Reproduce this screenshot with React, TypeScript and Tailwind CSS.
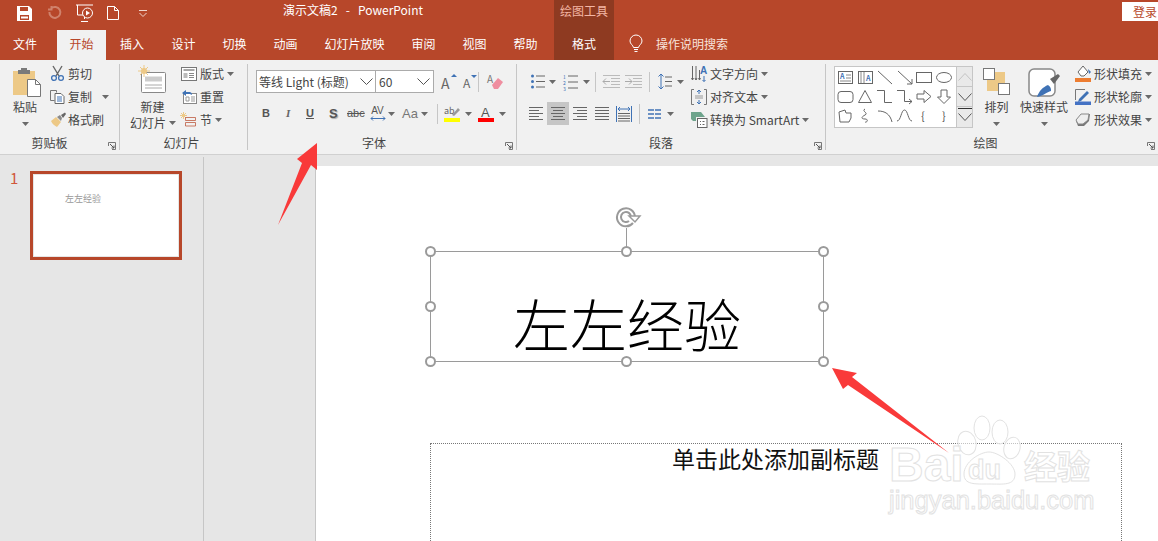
import React from 'react';

const Caret = ({ className = '' }: { className?: string }) => (
  <svg width="7" height="4" viewBox="0 0 7 4" className={`shrink-0 ${className}`}>
    <path d="M0 0h7L3.5 4z" fill="#6a6a6a" />
  </svg>
);

const Ico = ({ w = 16, h = 16, children, className = '' }: { w?: number; h?: number; children: React.ReactNode; className?: string }) => (
  <svg width={w} height={h} viewBox={`0 0 ${w} ${h}`} fill="none" className={`shrink-0 overflow-visible ${className}`}>
    {children}
  </svg>
);

const Launcher = () => (
  <svg width="8" height="8" viewBox="0 0 8 8" fill="none" className="absolute right-[3px] bottom-[4px]">
    <path d="M.5 4V.5H7.5V7.5H4" stroke="#777" />
    <path d="M2 2l4 4M6 3.500V6H3.500" stroke="#555" />
  </svg>
);

const Group = ({ width, label, labelClass = '', launcher = true, children }: { width: string; label: string; labelClass?: string; launcher?: boolean; children: React.ReactNode }) => (
  <div className={`relative flex flex-col h-full shrink-0 ${width}`}>
    <div className="h-[75px] flex">{children}</div>
    <div className={`text-center text-[12px] leading-[16px] text-[#444] ${labelClass}`}>{label}</div>
    {launcher && <Launcher />}
  </div>
);

const Sep = () => <div className="w-px my-[4px] h-[86px] bg-[#c6c6c6] shrink-0" />;
const VSep = () => <div className="w-px h-[20px] bg-[#c6c6c6] shrink-0" />;

const Row = ({ children, className = '' }: { children: React.ReactNode; className?: string }) => (
  <div className={`h-[23px] flex items-center text-[12px] text-[#444] whitespace-nowrap ${className}`}>{children}</div>
);

const tabs = [
  { label: '文件', cls: 'w-[50px] mr-[7px]' },
  { label: '开始', cls: 'w-[49px] bg-[#f1f1f1] text-[#b7472a]' },
  { label: '插入', cls: 'w-[52px]' },
  { label: '设计', cls: 'w-[51px]' },
  { label: '切换', cls: 'w-[51px]' },
  { label: '动画', cls: 'w-[51px]' },
  { label: '幻灯片放映', cls: 'w-[87px]' },
  { label: '审阅', cls: 'w-[51px]' },
  { label: '视图', cls: 'w-[51px]' },
  { label: '帮助', cls: 'w-[51px] mr-[3px]' },
  { label: '格式', cls: 'w-[60px] bg-[#8e3a21]' },
];

const TitleBar = () => (
  <div className="h-[30px] bg-[#b7472a] flex items-start text-white shrink-0">
    <div className="flex items-center h-[26px] pl-[17px] w-[283px]">
      <Ico w={15} h={15}>
        <path d="M0 0h12l3 3v12H0z" fill="#fff" />
        <path d="M3 1h8v4H3zM3 9h9v5H3z" fill="#b7472a" />
        <path d="M4 10.500h7v2H4z" fill="#fff" />
      </Ico>
      <Ico w={14} h={14} className="ml-[15px]">
        <path d="M4 2.500a5.500 5.500 0 1 1-1.600 3.500M4.500 0v3.500H1" stroke="#d0826c" strokeWidth="2" />
      </Ico>
      <Ico w={17} h={18} className="ml-[15px]">
        <path d="M0 1h17M1.500 1v10h7M8.500 11v4M5 17.500h7" stroke="#fff" />
        <circle cx="11.500" cy="9" r="5" fill="#b7472a" stroke="#fff" />
        <path d="M10 6.500l4 2.500-4 2.500z" fill="#fff" />
      </Ico>
      <Ico w={12} h={14} className="ml-[14px]">
        <path d="M.5.500h7l4 4v9H.5zM7.500.500v4h4" stroke="#fff" />
      </Ico>
      <Ico w={8} h={7} className="ml-[20px]">
        <path d="M0 .500h8M.5 3l3.500 3.500L7.500 3" stroke="#f0d5cc" />
      </Ico>
    </div>
    <div className="w-[271px] h-[20px] flex items-center text-[12px] whitespace-pre">演示文稿2   -   PowerPoint</div>
    <div className="w-[60px] h-[30px] bg-[#8e3a21] text-[#f3b6a4] text-[12px] pt-[2px] text-center leading-[17px]">绘图工具</div>
    <div className="flex-1" />
    <div className="w-[36px] h-[19px] mt-[2px] bg-white text-[#b7472a] text-[12px] flex items-center justify-end pr-[1px]">登录</div>
  </div>
);

const TabBar = () => (
  <div className="h-[30px] bg-[#b7472a] flex text-white text-[12px] shrink-0">
    {tabs.map((t) => (
      <div key={t.label} className={`h-full flex items-center justify-center pb-[2px] ${t.cls}`}>{t.label}</div>
    ))}
    <div className="flex items-center ml-[15px] text-[#f7e3dc] pb-[2px]">
      <Ico w={14} h={18}>
        <path d="M4.500 12.500C4 10 1 9 1 6a6 6 0 0 1 12 0c0 3-3 4-3.500 6.500z" stroke="#fff" />
        <path d="M5 14.500h4M5.500 16.500h3" stroke="#fff" />
      </Ico>
      <span className="ml-[13px]">操作说明搜索</span>
    </div>
  </div>
);

const Clipboard = () => (
  <Group width="w-[119px]" label="剪贴板" labelClass="pr-[20px]">
    <div className="w-[50px] flex flex-col items-center pt-[8px]">
      <Ico w={28} h={29} className="ml-[4px]">
        <path d="M0 3h22v24H0z" fill="#edc987" />
        <path d="M5 2h12v4H5zM8 0h6v3H8z" fill="#7a7a7a" />
        <path d="M14.500 11.500h8l5 5v12h-13z" fill="#fff" stroke="#777" />
        <path d="M22.500 11.500v5h5" stroke="#777" />
      </Ico>
      <div className="text-[12px] text-[#444] leading-[16px] mt-[2px] whitespace-nowrap">粘贴</div>
      <Caret className="mt-[7px]" />
    </div>
    <div className="pt-[2px]">
      <Row>
        <Ico w={15} h={15}>
          <path d="M3 0l6 10M12 0L6 10" stroke="#666" strokeWidth="1.400" />
          <circle cx="4" cy="12" r="2.400" stroke="#3f72b5" strokeWidth="1.300" />
          <circle cx="11" cy="12" r="2.400" stroke="#3f72b5" strokeWidth="1.300" />
        </Ico>
        <span className="ml-[3px]">剪切</span>
      </Row>
      <Row>
        <Ico w={15} h={14}>
          <path d="M.5.500h6v2M.5.500v10h4" stroke="#777" />
          <path d="M5 3.500h6l3 3v7H5z" fill="#fff" stroke="#666" />
          <path d="M7 7h5M7 9h5M7 11h5" stroke="#3f72b5" />
        </Ico>
        <span className="ml-[3px]">复制</span>
        <Caret className="ml-[10px]" />
      </Row>
      <Row>
        <Ico w={16} h={15}>
          <path d="M1 9l5-4 5 5-4 5C5 14 2 12 1 9z" fill="#edc987" />
          <path d="M7 5l3-2 2 3-1 3z" fill="#8a8a8a" />
          <path d="M11 3l4-2.500 1 1.500-3 4z" fill="#666" />
        </Ico>
        <span className="ml-[2px]">格式刷</span>
      </Row>
    </div>
  </Group>
);

const Slides = () => (
  <Group width="w-[127px]" label="幻灯片" labelClass="pr-[4px]" launcher={false}>
    <div className="w-[58px] flex flex-col items-center pt-[5px] pl-[7px] shrink-0">
      <Ico w={28} h={28} className="-ml-[2px]">
        <rect x="3.500" y="7.500" width="24" height="20" rx="1" fill="#fff" stroke="#888" />
        <path d="M7 11.500h17v5H7z" fill="#ccc" />
        <path d="M7 20h17M7 23h17" stroke="#aaa" />
        <circle cx="6" cy="6" r="3" fill="#edc987" />
        <path d="M6 0v12M0 6h12M2 2l8 8M10 2l-8 8" stroke="#edc987" />
      </Ico>
      <div className="text-[12px] leading-[16px] text-[#444] mt-[6px]">新建</div>
      <div className="flex items-center text-[12px] leading-[16px] text-[#444] whitespace-nowrap ml-[1px]">幻灯片<Caret className="ml-[3px]" /></div>
    </div>
    <div className="pt-[2px] ml-[3px]">
      <Row>
        <Ico w={16} h={14}>
          <rect x=".5" y=".5" width="15" height="13" fill="#fff" stroke="#777" />
          <path d="M2.500 3h11" stroke="#888" strokeWidth="1.500" />
          <path d="M2.500 6h4v5h-4z" fill="#bbb" />
          <path d="M8 6.500h5M8 8.500h5M8 10.500h5" stroke="#888" />
        </Ico>
        <span className="ml-[3px]">版式</span>
        <Caret className="ml-[3px]" />
      </Row>
      <Row>
        <Ico w={16} h={15}>
          <rect x="2.500" y="4.500" width="13" height="10" fill="#fff" stroke="#888" />
          <path d="M5 8h3v4H5zM10 8h4M10 10h4M10 12h4" stroke="#999" />
          <path d="M1 4l4-3v2h4a3 3 0 0 1 2 3L9 5H5v2z" fill="#3f72b5" />
        </Ico>
        <span className="ml-[3px]">重置</span>
      </Row>
      <Row>
        <Ico w={16} h={15} className="-ml-[1px]">
          <path d="M3.500 0v7M0 3.500h7M1 1l5 5M6 1L1 6" stroke="#edc987" />
          <path d="M5.500 5.500h10v3h-10zM5.500 10.500h10v3.500h-10z" stroke="#b7472a" className="opacity-70" />
        </Ico>
        <span className="ml-[4px]">节</span>
        <Caret className="ml-[3px]" />
      </Row>
    </div>
  </Group>
);

const FontGroup = () => (
  <Group width="w-[268px]" label="字体" labelClass="pr-[16px]">
    <div className="pl-[8px] pt-[10px] text-[#444]">
      <div className="flex items-center h-[23px]">
        <div className="w-[120px] h-[23px] bg-white border border-[#ababab] flex items-center pl-[2px] pr-[2px] text-[12px] whitespace-nowrap justify-between">
          <span>等线 Light (标题)</span>
          <Ico w={13} h={7}><path d="M.5.500l6 6 6-6" stroke="#555" /></Ico>
        </div>
        <div className="w-[58px] h-[23px] bg-white border border-l-0 border-[#ababab] flex items-center pl-[3px] pr-[3px] text-[12px] justify-between">
          <span>60</span>
          <Ico w={13} h={7}><path d="M.5.500l6 6 6-6" stroke="#555" /></Ico>
        </div>
        <div className="relative w-[22px] ml-[7px] text-[14px] text-[#666] leading-none pt-[2px]">A<span className="absolute left-[10px] top-[0px] w-0 h-0 border-x-[3px] border-x-transparent border-b-[3px] border-b-[#3f72b5]" /></div>
        <div className="relative w-[15px] text-[12px] text-[#666] leading-none pt-[2px]">A<span className="absolute left-[8px] top-[0px] w-0 h-0 border-x-[3px] border-x-transparent border-t-[3px] border-t-[#3f72b5]" /></div>
        <VSep />
        <Ico w={16} h={15} className="ml-[8px]">
          <path d="M5 11l6-7 5 4-5 7H7z" fill="#ef8ea0" />
          <text x="0" y="9" fontSize="10" fill="#777">A</text>
        </Ico>
      </div>
      <div className="flex items-center h-[23px] mt-[9px]">
        <span className="w-[22px] ml-[6px] text-[11px] font-bold text-[#555] font-['Liberation_Sans']">B</span>
        <span className="w-[22px] text-[11px] italic font-bold text-[#666] font-['Liberation_Serif'] pl-[2px]">I</span>
        <span className="w-[23px] text-[11px] font-bold underline text-[#555] font-['Liberation_Sans']">U</span>
        <span className="w-[18px] text-[13px] font-bold text-[#555] [text-shadow:1px_1px_1px_#aaa] font-['Liberation_Sans']">S</span>
        <span className="w-[20px] text-[11px] line-through text-[#555] font-['Liberation_Sans']">abc</span>
        <div className="relative w-[17px] ml-[2px] flex flex-col items-center text-[10px] leading-[10px] text-[#555] font-['Liberation_Sans']">
          AV
          <Ico w={16} h={5}><path d="M1 2.500h14M3 .5l-2 2 2 2M13 .5l2 2-2 2" stroke="#3f72b5" /></Ico>
        </div>
        <Caret className="ml-[2px]" />
        <span className="w-[16px] ml-[7px] text-[13px] text-[#777] font-['Liberation_Sans']">Aa</span>
        <Caret className="ml-[3px]" />
        <div className="ml-[9px] mr-[6px]"><VSep /></div>
        <Ico w={16} h={16}>
          <text x="0" y="8" fontSize="9" fill="#666">ab</text>
          <path d="M8 9l6-7 2 2-6 6z" fill="#999" />
          <path d="M0 12h16v4H0z" fill="#ff0" />
        </Ico>
        <Caret className="ml-[5px]" />
        <Ico w={16} h={16} className="ml-[6px]">
          <text x="3" y="11" fontSize="13" fill="#555" fontFamily="Liberation Sans">A</text>
          <path d="M0 12h16v4H0z" fill="#f00" />
        </Ico>
        <Caret className="ml-[5px]" />
      </div>
    </div>
  </Group>
);

const Lines = ({ kind }: { kind: 'left' | 'center' | 'right' | 'justify' }) => {
  const d = {
    left: 'M0 .5h14M0 3.500h10M0 6.500h14M0 9.500h10M0 12.500h14',
    center: 'M0 .5h14M2 3.500h10M0 6.500h14M2 9.500h10M0 12.500h14',
    right: 'M0 .5h14M4 3.500h10M0 6.500h14M4 9.500h10M0 12.500h14',
    justify: 'M0 .5h14M0 3.500h14M0 6.500h14M0 9.500h14M0 12.500h14',
  }[kind];
  return <Ico w={14} h={13}><path d={d} stroke="#666" /></Ico>;
};

const Paragraph = () => (
  <Group width="w-[308px]" label="段落" labelClass="pr-[20px]">
    <div className="w-[172px] pt-[10px] shrink-0">
      <div className="flex items-center h-[23px] pl-[14px]">
        <Ico w={14} h={15}>
          <circle cx="1.500" cy="2" r="1.500" fill="#3f72b5" />
          <circle cx="1.500" cy="7.500" r="1.500" fill="#3f72b5" />
          <circle cx="1.500" cy="13" r="1.500" fill="#3f72b5" />
          <path d="M5 2h9M5 7.500h9M5 13h9" stroke="#666" />
        </Ico>
        <Caret className="ml-[4px]" />
        <Ico w={15} h={16} className="ml-[7px]">
          <text x="0" y="4.500" fontSize="5" fill="#3f72b5">1</text>
          <text x="0" y="10.500" fontSize="5" fill="#3f72b5">2</text>
          <text x="0" y="16.500" fontSize="5" fill="#3f72b5">3</text>
          <path d="M5 2h10M5 8h10M5 14h10" stroke="#666" />
        </Ico>
        <Caret className="ml-[5px]" />
        <div className="ml-[5px]"><VSep /></div>
        <Ico w={17} h={13} className="ml-[7px]">
          <path d="M0 .5h17M8 3.500h9M8 6.500h9M8 9.500h9M0 12.500h17" stroke="#bbb" />
          <path d="M0 6.500h7M3 3.500l-3 3 3 3" stroke="#aaa" />
        </Ico>
        <Ico w={17} h={13} className="ml-[5px]">
          <path d="M0 .5h17M8 3.500h9M8 6.500h9M8 9.500h9M0 12.500h17" stroke="#bbb" />
          <path d="M0 6.500h7M4 3.500l3 3-3 3" stroke="#aaa" />
        </Ico>
        <div className="ml-[7px]"><VSep /></div>
        <Ico w={14} h={17} className="ml-[8px]">
          <path d="M3 1v15M.5 3.500L3 1l2.500 2.500M.5 13.500L3 16l2.500-2.500" stroke="#3f72b5" />
          <path d="M7 4h7M7 8.500h7M7 13h7" stroke="#666" />
        </Ico>
        <Caret className="ml-[5px]" />
      </div>
      <div className="flex items-center h-[23px] mt-[9px] pl-[12px]">
        <Lines kind="left" />
        <div className="w-[22px] h-[23px] ml-[4px] bg-[#c6c6c6] flex items-center justify-center"><Lines kind="center" /></div>
        <div className="ml-[4px]"><Lines kind="right" /></div>
        <div className="ml-[8px]"><Lines kind="justify" /></div>
        <Ico w={16} h={16} className="ml-[7px]">
          <path d="M.5 0v16M15.500 0v16" stroke="#3f72b5" />
          <path d="M2 3h12M4 1L2 3l2 2M12 1l2 2-2 2" stroke="#3f72b5" />
          <path d="M2 7.500h12M2 10h12M2 12.500h12M2 15h12" stroke="#666" />
        </Ico>
        <div className="ml-[7px]"><VSep /></div>
        <Ico w={13} h={10} className="ml-[8px]">
          <path d="M0 1h6M0 5h6M0 9h6M7 1h6M7 5h6M7 9h6" stroke="#3f72b5" strokeWidth="1.300" />
        </Ico>
        <Caret className="ml-[6px]" />
      </div>
    </div>
    <div className="pt-[2px] ml-[2px]">
      <Row>
        <Ico w={16} h={16}>
          <path d="M1.500 0v14M.5 12l1 2 1-2M5 0v14M4 12l1 2 1-2M8.500 4v10M7.500 12l1 2 1-2" stroke="#666" />
          <text x="9" y="8" fontSize="10" fontWeight="700" fill="#3f72b5" fontFamily="Liberation Sans">A</text>
          <path d="M13 10v5.500M11.500 14l1.500 1.500 1.500-1.500" stroke="#3f72b5" />
        </Ico>
        <span className="ml-[3px]">文字方向</span>
        <Caret className="ml-[3px]" />
      </Row>
      <Row>
        <Ico w={16} h={16}>
          <path d="M3 .5H.5v15H3M13 .5h2.500v15H13" stroke="#777" />
          <path d="M8 1v4M6 3l2-2 2 2M8 15v-4M6 13l2 2 2-2" stroke="#3f72b5" />
          <path d="M4 7h8M4 9h8" stroke="#999" />
        </Ico>
        <span className="ml-[3px]">对齐文本</span>
        <Caret className="ml-[3px]" />
      </Row>
      <Row>
        <Ico w={16} h={16}>
          <path d="M0 0h10l4 5H5v4H2L0 7z" fill="#6ea48c" />
          <rect x="6.500" y="6.500" width="9.500" height="9" fill="#fff" stroke="#666" />
          <path d="M9 9.500h1M9 12.500h1M11.500 9.500h2M11.500 12.500h2" stroke="#666" />
        </Ico>
        <span className="ml-[3px]">转换为 SmartArt</span>
        <Caret className="ml-[3px]" />
      </Row>
    </div>
  </Group>
);

// small outlines of the shape gallery, three rows of six
const gallery: React.ReactNode[] = [
  <g key="a"><rect x="1.500" y="1.500" width="14" height="12" stroke="#666" /><text x="3" y="9" fontSize="7" fontWeight="700" fill="#3f72b5">A</text><path d="M9 5h5M9 8h5M3 11h11" stroke="#888" /></g>,
  <g key="b"><rect x="1.500" y="1.500" width="14" height="12" stroke="#666" /><path d="M4 2v11M7 2v11" stroke="#888" /><text x="9" y="11" fontSize="7" fontWeight="700" fill="#3f72b5">A</text></g>,
  <path key="c" d="M1 1l14 13" stroke="#666" />,
  <path key="d" d="M1 1l14 13M15 9v5h-5" stroke="#666" />,
  <rect key="e" x="0.500" y="2.500" width="15" height="10" stroke="#666" />,
  <ellipse key="f" cx="8" cy="7.500" rx="7.500" ry="5" stroke="#666" />,
  <rect key="g" x="1" y="2.500" width="15" height="11" rx="3" stroke="#666" />,
  <path key="h" d="M8 1.500l6.500 12h-13z" stroke="#666" />,
  <path key="i" d="M0 1.500h7.500v12H15" stroke="#666" />,
  <path key="j" d="M0 1.500h7.500v11H15M12 10l3 2.500-3 2.500" stroke="#666" />,
  <path key="k" d="M1 5h7V1.500l7 6-7 6V10H1z" stroke="#666" />,
  <path key="l" d="M5 1h6v7h3.500L8 14.500 1.500 8H5z" stroke="#666" />,
  <path key="m" d="M2 4l6-2 1 3h5v5l-2 4H3z" stroke="#666" />,
  <path key="n" d="M8 1C4 3 12 5 8 7S4 11 8 11s2 4 0 3" stroke="#666" />,
  <path key="o" d="M1 3c7 0 12 3 14 11" stroke="#666" />,
  <path key="p" d="M0 13C4 13 4 2 7.500 2S11 13 15 13" stroke="#666" />,
  <text key="q" x="5" y="12" fontSize="11" fill="#555">{'{'}</text>,
  <text key="r" x="6" y="12" fontSize="11" fill="#555">{'}'}</text>,
];

const Drawing = () => (
  <Group width="w-[332px]" label="绘图" labelClass="pr-[13px]">
    <div className="pl-[8px] pt-[6px] shrink-0">
      <div className="flex w-[139px] h-[62px] border border-[#c6c6c6] bg-white">
        <div className="w-[121px] grid grid-cols-6 grid-rows-3 pl-[2px] pt-[3px] h-[60px]">
          {gallery.map((g, i) => (
            <Ico key={i} w={17} h={16}>{g}</Ico>
          ))}
        </div>
        <div className="w-[16px] flex flex-col bg-[#e9e9e9] border-l border-[#c6c6c6]">
          <div className="h-[20px] flex items-center justify-center border-b border-[#c6c6c6]"><Ico w={14} h={8}><path d="M.5 7.500l6.500-7 6.500 7" stroke="#c4c4c4" /></Ico></div>
          <div className="h-[20px] flex items-center justify-center border-b border-[#c6c6c6]"><Ico w={14} h={8}><path d="M.5.500l6.500 7 6.500-7" stroke="#555" /></Ico></div>
          <div className="h-[20px] flex flex-col items-center justify-start gap-[4px]"><div className="w-[14px] h-px bg-[#333] mt-[1px]" /><Ico w={14} h={8}><path d="M.5.500l6.500 7 6.500-7" stroke="#555" /></Ico></div>
        </div>
      </div>
    </div>
    <div className="w-[27px] ml-[10px] flex flex-col items-center pt-[8px] shrink-0">
      <Ico w={27} h={27}>
        <rect x="4" y="4" width="18" height="19" fill="#edc987" />
        <rect x=".5" y=".5" width="11" height="11" fill="#fff" stroke="#777" />
        <rect x="15.500" y="15.500" width="11" height="11" fill="#fff" stroke="#777" />
      </Ico>
      <div className="text-[12px] leading-[16px] text-[#444] mt-[4px] whitespace-nowrap">排列</div>
      <Caret className="mt-[7px]" />
    </div>
    <div className="w-[50px] ml-[9px] flex flex-col items-center pt-[8px] shrink-0">
      <Ico w={32} h={31}>
        <rect x="1" y="1" width="26" height="27" rx="5" fill="#fff" stroke="#888" strokeWidth="1.500" />
        <path d="M22 11l8-5 2 2-6 8z" fill="#666" />
        <path d="M9 29c2-6 6-10 11-12 3 2 3 4 3 6-4 1-8 5-14 6z" fill="#3f72b5" />
      </Ico>
      <div className="text-[12px] leading-[16px] text-[#444] whitespace-nowrap">快速样式</div>
      <Caret className="mt-[7px]" />
    </div>
    <div className="pt-[2px] ml-[6px]">
      <Row>
        <Ico w={16} h={17}>
          <path d="M3 7l5-6 5 6-4 4H6z" fill="#fff" stroke="#666" />
          <path d="M13 4l3 3-2 2z" fill="#3f72b5" />
          <path d="M0 13h16v4H0z" fill="#ed7d31" />
        </Ico>
        <span className="ml-[3px]">形状填充</span>
        <Caret className="ml-[3px]" />
      </Row>
      <Row>
        <Ico w={16} h={16}>
          <path d="M.5 11V.5H10" stroke="#777" />
          <path d="M4 10l8-8 2 2-8 8-3 1z" fill="#3f72b5" />
          <path d="M0 12.500h16V16H0z" fill="#4472c4" />
        </Ico>
        <span className="ml-[3px]">形状轮廓</span>
        <Caret className="ml-[3px]" />
      </Row>
      <Row>
        <Ico w={16} h={14}>
          <path d="M1 8l6-7h8l-1 7-5 5H3z" fill="#777" />
          <path d="M1 7l5-6h8l-1 6-5 4H3z" fill="#eee" stroke="#888" />
        </Ico>
        <span className="ml-[3px]">形状效果</span>
        <Caret className="ml-[3px]" />
      </Row>
    </div>
  </Group>
);

const Handle = ({ className }: { className: string }) => (
  <div className={`absolute w-[11px] h-[11px] rounded-full bg-white border-2 border-[#9a9a9a] ${className}`} />
);

const SlideCanvas = () => (
  <div className="relative flex-1 mt-[11px] bg-white overflow-hidden">
    {/* rotate handle */}
    <svg width="28" height="24" viewBox="0 0 28 24" fill="none" className="absolute left-[298px] top-[40px]">
      <path d="M19 17a9 9 0 1 1 2-6" stroke="#9a9a9a" strokeWidth="2" />
      <path d="M15 15a5 5 0 1 1 2-4" stroke="#9a9a9a" strokeWidth="2" />
      <path d="M15 10h11l-5 6z" fill="#fff" stroke="#9a9a9a" strokeWidth="1.500" />
    </svg>
    <div className="absolute left-[310px] top-[62px] w-px h-[23px] bg-[#9a9a9a]" />

    <div className="absolute left-[114px] top-[85px] w-[394px] h-[111px] border border-[#9a9a9a] flex items-center justify-center pt-[31px] text-[57px] font-light text-black leading-none">
      左左经验
      <Handle className="-left-[6px] -top-[6px]" />
      <Handle className="left-[190px] -top-[6px]" />
      <Handle className="-right-[6px] -top-[6px]" />
      <Handle className="-left-[6px] top-[49px]" />
      <Handle className="-right-[6px] top-[49px]" />
      <Handle className="-left-[6px] -bottom-[6px]" />
      <Handle className="left-[190px] -bottom-[6px]" />
      <Handle className="-right-[6px] -bottom-[6px]" />
    </div>

    <div className="absolute left-[114px] top-[277px] w-[692px] h-[140px] border border-dotted border-[#777] text-center text-[23px] leading-[28px] text-[#111] pr-[1px]">
      单击此处添加副标题
    </div>
  </div>
);

const Overlay = () => (
  <svg width="1158" height="541" viewBox="0 0 1158 541" className="absolute left-0 top-0 pointer-events-none">
    <path d="M278 225L302 163 297 159 317 143V170L311 165Z" fill="#f93a3a" />
    <path d="M832 368L857 373 852 377 949 453 848 385 843 389Z" fill="#f93a3a" />
    {/* watermark */}
    <g stroke="#e2e2e2" strokeWidth="1" fill="#fff" fillOpacity="0.55">
      <ellipse cx="967" cy="443" rx="9" ry="12" transform="rotate(-15 967 443)" />
      <ellipse cx="982" cy="428" rx="8" ry="12" />
      <ellipse cx="1000" cy="432" rx="8" ry="12" />
      <ellipse cx="1012" cy="448" rx="8" ry="11" transform="rotate(15 1012 448)" />
      <path d="M964 474c0-12 16-22 25-22s26 12 26 22c0 12-12 10-26 10s-25 1-25-10z" />
      <text x="889" y="481" fontSize="48" fontWeight="700" fontFamily="Liberation Sans">Bai</text>
      <text x="968" y="479" fontSize="27" fontWeight="700" fontFamily="Liberation Sans">du</text>
      <text x="1024" y="479" fontSize="33" fontWeight="700">经验</text>
      <text x="889" y="509" fontSize="25.500" fontFamily="Liberation Sans">jingyan.baidu.com</text>
    </g>
  </svg>
);

export default function App() {
  return (
    <div className="relative w-[1158px] h-[541px] overflow-hidden flex flex-col bg-[#e6e6e6] font-['Noto_Sans_CJK_SC','Liberation_Sans',sans-serif]">
      <TitleBar />
      <TabBar />
      <div className="h-[95px] bg-[#f1f1f1] flex shrink-0 border-b border-[#d0d0d0]">
        <Clipboard />
        <Sep />
        <Slides />
        <Sep />
        <FontGroup />
        <Sep />
        <Paragraph />
        <Sep />
        <Drawing />
      </div>
      <div className="flex-1 flex min-h-0">
        <div className="w-[204px] shrink-0 border-r border-[#c6c6c6] mt-[2px] flex pl-[10px] pt-[13px]">
          <div className="text-[15px] text-[#d0573a] leading-[16px] w-[20px]">1</div>
          <div className="w-[152px] h-[89px] mt-[1px] border-[3px] border-[#b7472a] bg-white text-[9px] text-[#999] pl-[32px] pt-[19px] leading-[12px] outline outline-[#e6e6e6] -outline-offset-4">左左经验</div>
        </div>
        <div className="w-[112px] shrink-0 border-r border-[#c6c6c6] mt-[11px]" />
        <SlideCanvas />
      </div>
      <Overlay />
    </div>
  );
}
